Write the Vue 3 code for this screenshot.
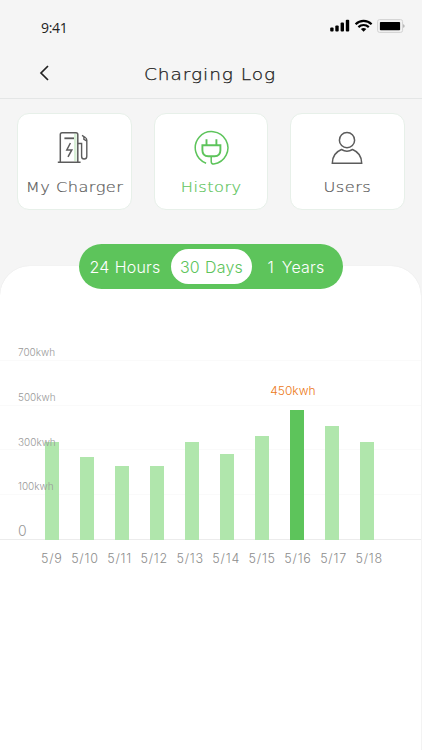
<script setup>
import { ref } from 'vue'

const tabs = [
  { id: 'charger', label: 'My Charger' },
  { id: 'history', label: 'History' },
  { id: 'users', label: 'Users' }
]
const ranges = ['24 Hours', '30 Days', '1 Years']

const activeTab = ref('history')
const activeRange = ref('30 Days')

const levels = ['700kwh', '500kwh', '300kwh', '100kwh', '0']

// height is in px above the base line
const days = [
  { date: '5/9', height: 98 },
  { date: '5/10', height: 83 },
  { date: '5/11', height: 74 },
  { date: '5/12', height: 74 },
  { date: '5/13', height: 98 },
  { date: '5/14', height: 85.5 },
  { date: '5/15', height: 103.5 },
  { date: '5/16', height: 129.5, value: '450kwh' },
  { date: '5/17', height: 113.5 },
  { date: '5/18', height: 98 }
]
</script>

<template>
  <div class="page">
    <div class="status">
      <span class="time">9:41</span>
      <svg class="status-icons" width="76" height="16" viewBox="0 0 76 16">
        <rect x="1.2" y="8.6" width="3.4" height="4" rx="1" />
        <rect x="6.3" y="6.6" width="3.4" height="6" rx="1" />
        <rect x="11.6" y="3.6" width="3.4" height="9" rx="1" />
        <rect x="16.8" y="0.8" width="3.4" height="11.8" rx="1" />
        <g fill="none" stroke="#000" stroke-width="2.2">
          <path d="M26.6 5.2C31.2 0.7 38 0.7 42.6 5.2" />
          <path d="M29.4 8.1C32.4 5.3 36.8 5.3 39.8 8.1" />
        </g>
        <path d="M31.9 10C33.5 8.8 35.7 8.8 37.3 10L34.6 12.8Z" />
        <rect x="48.6" y="0.6" width="25" height="12.8" rx="2" fill="#f3f3f3" stroke="#d2d2d2" />
        <rect x="50.9" y="3" width="20.2" height="8.2" rx="0.8" />
        <path d="M74.4 5.2C75.8 5.5 75.8 8.5 74.4 8.8Z" fill="#999" />
      </svg>
    </div>

    <header class="header">
      <button type="button" class="back" aria-label="Back">
        <svg width="12" height="18" viewBox="0 0 12 18">
          <path d="M10 2L3 9L10 16" fill="none" stroke="#222" stroke-width="1.7" />
        </svg>
      </button>
      <h1 class="title">Charging Log</h1>
    </header>

    <nav class="tabs">
      <button
        v-for="t in tabs"
        :key="t.id"
        type="button"
        class="tab"
        :class="{ active: t.id === activeTab }"
        @click="activeTab = t.id"
      >
        <svg class="tab-icon" width="36" height="36" viewBox="0 0 36 36">
          <g v-if="t.id === 'charger'" fill="none" stroke="currentColor" stroke-width="1.5">
            <path d="M19.3 3.5V31" stroke="#d8f0d6" stroke-width="2.6" />
            <path d="M4.3 31.8V4.5Q4.3 2.7 6.1 2.7H20Q21.8 2.7 21.8 4.5V31.8M1.8 32.3H24.6" />
            <path d="M8.4 8.3H18" stroke-width="1.8" />
            <path d="M14.4 13L10.8 19.9H15.8L12 26.8" />
            <path d="M21.8 13.5H25.6V26.2Q25.6 29 28.1 29Q30.8 29 30.8 26.2V10.2Q30.8 8.4 29.3 7.5L26 5.3M27.9 6.8V9.3L30.6 10.8" stroke-width="1.4" />
          </g>
          <g v-else-if="t.id === 'history'" fill="none" stroke="currentColor" stroke-width="1.5">
            <path d="M13.1 33.2A16.3 16.3 0 1 1 20.8 34Q18.2 34 18.2 31.4V26.2" />
            <path d="M9.4 15.2H27.4V20.2Q27.4 26.2 21.5 26.2H15.3Q9.4 26.2 9.4 20.2Z" stroke-width="1.9" />
            <path d="M13.5 9.3V15M23.4 9.3V15" stroke-width="1.9" />
          </g>
          <g v-else fill="none" stroke="currentColor" stroke-width="1.5">
            <circle cx="18" cy="10.2" r="7.6" />
            <path d="M12.5 19.5C7.5 21.5 3.3 26 3.3 33.3H32.7C32.7 26 28.5 21.5 23.5 19.5C20 21.6 16 21.6 12.5 19.5Z" />
          </g>
        </svg>
        <span class="tab-label">{{ t.label }}</span>
      </button>
    </nav>

    <main class="panel">
      <div class="ranges">
        <button
          v-for="r in ranges"
          :key="r"
          type="button"
          class="range"
          :class="{ active: r === activeRange }"
          @click="activeRange = r"
        >
          {{ r }}
        </button>
      </div>

      <div class="chart">
        <div v-for="l in levels" :key="l" class="level" :class="{ base: l === '0' }">
          <span>{{ l }}</span>
        </div>
        <div class="bars">
          <div
            v-for="d in days"
            :key="d.date"
            class="bar"
            :class="{ peak: d.value }"
            :style="{ height: d.height + 'px' }"
          >
            <span v-if="d.value" class="value">{{ d.value }}</span>
          </div>
        </div>
      </div>
      <div class="dates">
        <span v-for="d in days" :key="d.date">{{ d.date }}</span>
      </div>
    </main>
  </div>
</template>

<style>
body {
  margin: 0;
  background: #f5f5f5;
}
</style>

<style scoped>
.page {
  width: 422px;
  height: 750px;
  display: flex;
  flex-direction: column;
  overflow: hidden;
  background: #f5f5f5;
  font-family: Inter, "Liberation Sans", sans-serif;
}

button {
  border: none;
  padding: 0;
  background: transparent;
  font: inherit;
  cursor: pointer;
}

.status {
  height: 50px;
  box-sizing: border-box;
  display: flex;
  justify-content: space-between;
  padding: 19px 17px 0 41px;
}

.time {
  font-family: "Open Sans", "Noto Sans", sans-serif;
  font-size: 14px;
  font-weight: 400;
  line-height: 17px;
  letter-spacing: -0.3px;
  color: #222;
}

.status-icons {
  display: block;
}

.header {
  height: 49px;
  box-sizing: border-box;
  border-bottom: 1px solid #e4e6e6;
  display: flex;
  align-items: center;
  padding: 0 38px;
}

.back {
  width: 12px;
  height: 18px;
  margin-top: -3px;
}

.back svg {
  display: block;
}

.title {
  flex: 1;
  margin: 0 14px 0 0;
  text-align: center;
  font-family: "DejaVu Sans", sans-serif;
  font-size: 16px;
  font-weight: 200;
  letter-spacing: 0.8px;
  color: #222;
  transform: scaleX(1.16);
  -webkit-text-stroke: 0.25px currentColor;
}

.tabs {
  display: flex;
  gap: 22px;
  padding: 14px 17px 0;
}

.tab {
  width: 114.5px;
  height: 97px;
  box-sizing: border-box;
  border: 1.5px solid #e7f0e9;
  border-radius: 12px;
  background: #fff;
  color: #5c5c5c;
  display: flex;
  flex-direction: column;
  align-items: center;
  padding-top: 16px;
}

.tab.active {
  color: #5dc45b;
}

.tab-icon {
  display: block;
}

.tab-label {
  margin-top: 11px;
  font-family: "DejaVu Sans", sans-serif;
  font-size: 14.5px;
  font-weight: 200;
  line-height: 20px;
  letter-spacing: 0.4px;
  white-space: nowrap;
  transform: scaleX(1.12);
  -webkit-text-stroke: 0.2px currentColor;
}

.panel {
  height: 484px;
  flex-shrink: 0;
  margin: 56px 1px 0 0;
  border-radius: 30px 30px 0 0;
  background: #fff;
  box-shadow: 0 0 1px #ddd;
}

.ranges {
  width: 264px;
  height: 45px;
  box-sizing: border-box;
  margin: -22px auto 0 79px;
  border-radius: 23px;
  background: #5dc45b;
  display: flex;
  align-items: center;
  position: relative;
}

.range {
  width: 92px;
  height: 35px;
  border-radius: 18px;
  color: #fff;
  font-size: 16px;
  font-weight: 300;
  letter-spacing: 0.2px;
  word-spacing: 0.5px;
  white-space: nowrap;
}

.range:last-child {
  width: 88px;
  word-spacing: 3px;
}

.range.active {
  width: 81px;
  background: #fff;
  color: #5dc45b;
}

.chart {
  position: relative;
  padding-top: 27px;
}

.level {
  height: 44.8px;
  box-sizing: border-box;
  border-bottom: 1px solid #fafafa;
  padding: 28px 0 0 18px;
  font-size: 10px;
  font-weight: 300;
  line-height: 16px;
  color: #999;
}

/* labels stay readable over the first bar */
.level span {
  position: relative;
  z-index: 1;
}

.level.base {
  border-color: #ececec;
  font-size: 14px;
}

.bars {
  position: absolute;
  left: 45px;
  right: 47px;
  bottom: 0;
  display: flex;
  justify-content: space-between;
  align-items: flex-end;
}

.bar {
  width: 13.6px;
  background: #b0e6ac;
  position: relative;
}

.bar.peak {
  background: #5dc45b;
}

.value {
  position: absolute;
  top: -28px;
  left: -20px;
  font-size: 12px;
  font-weight: 300;
  line-height: 18px;
  color: #ec7a20;
}

.dates {
  display: flex;
  justify-content: space-between;
  padding: 10px 38px 0 41px;
  font-size: 12.5px;
  font-weight: 300;
  line-height: 17px;
  letter-spacing: 0.8px;
  color: #8c8c8c;
}
</style>
